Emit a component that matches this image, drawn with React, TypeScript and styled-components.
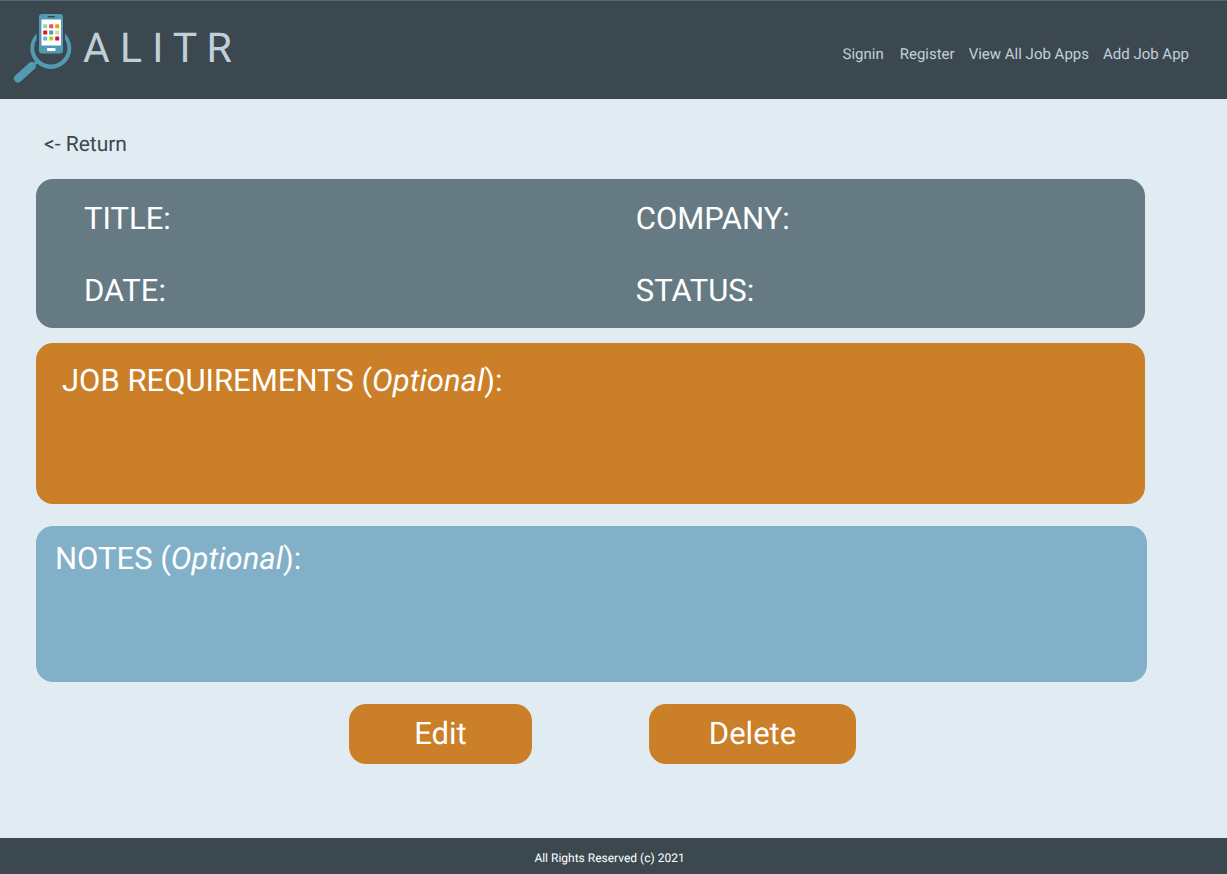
import React from "react";
import styled, { createGlobalStyle } from "styled-components";

const GlobalStyle = createGlobalStyle`
  *, *::before, *::after { box-sizing: border-box; }
  body {
    margin: 0;
    background: #e1ecf2;
    font-family: Roboto, "Liberation Sans", sans-serif;
    text-rendering: geometricPrecision;
  }
`;

const Page = styled.div`
  display: flex;
  flex-direction: column;
  min-height: 100vh;
`;

const Header = styled.header`
  display: flex;
  align-items: flex-start;
  justify-content: space-between;
  height: 99px;
  padding: 0 38px 0 12px;
  border-top: 1px solid #56646c;
  background: #3c484f;
`;

const Brand = styled.a`
  display: flex;
  align-items: flex-start;
  gap: 11px;
  padding-top: 12px;
  color: #c0d0da;
  text-decoration: none;
`;

const BrandName = styled.span`
  padding-top: 11px;
  font-size: 41px;
  line-height: 50px;
  white-space: nowrap;
`;

const Nav = styled.nav`
  display: flex;
  gap: 14px;
  padding-top: 43px;
`;

const NavLink = styled.a`
  color: #c0d0da;
  font-size: 15px;
  line-height: 20px;
  text-decoration: none;
  white-space: nowrap;

  &:first-child { margin-right: 2px; }
`;

const Main = styled.main`
  flex: 1;
  display: flex;
  flex-direction: column;
  padding: 34px 80px 40px 36px;
`;

const ReturnLink = styled.a`
  align-self: flex-start;
  margin: 0 0 22px 8px;
  color: #3c484f;
  font-size: 21px;
  line-height: 24px;
  text-decoration: none;
`;

const Panel = styled.section<{ $color: string }>`
  border-radius: 17px;
  background: ${({ $color }) => $color};
  color: #fff;
`;

const Summary = styled(Panel)`
  display: grid;
  grid-template-columns: 52fr 48fr;
  row-gap: 36px;
  margin: 0 2px 15px 0;
  padding: 22px 0 19px 48px;
`;

const Requirements = styled(Panel)`
  min-height: 161px;
  margin: 0 2px 22px 0;
  padding: 20px 26px;
`;

const Notes = styled(Panel)`
  min-height: 156px;
  margin-bottom: 22px;
  padding: 15px 19px;
`;

const Label = styled.h2`
  margin: 0;
  font-size: 31px;
  font-weight: 400;
  line-height: 36px;
`;

const Actions = styled.div`
  display: flex;
  align-items: flex-start;
  justify-content: center;
  gap: 117px;
  padding-left: 22px;
`;

const ActionButton = styled.button<{ $width: number }>`
  width: ${({ $width }) => $width}px;
  height: 60px;
  padding: 0;
  border: 0;
  border-radius: 17px;
  background: #ca7f28;
  color: #fff;
  font-family: inherit;
  font-size: 31px;
  line-height: 36px;
  text-rendering: inherit;
  cursor: pointer;
`;

const Footer = styled.footer`
  padding: 12px 8px 8px 0;
  background: #3c484f;
  color: #fff;
  font-size: 12px;
  line-height: 16px;
  text-align: center;
`;

const appTiles = [
  "#93d6a8", "#e84f68", "#f09a1c",
  "#e3161f", "#4f9ab3", "#bde58a",
  "#70b5d2", "#a5d91f", "#e6006f",
];

const Logo = () => (
  <svg width="60" height="72" viewBox="12 13 60 72" aria-hidden="true">
    <path
      d="M36.6 33.6A20.5 20.5 0 1 0 65 33.6V39.2A16.6 16.6 0 1 1 36.6 39.2Z"
      fill="#529bb2"
    />
    <path d="M39 59.5l-5 5" stroke="#529bb2" strokeWidth="3" />
    <path d="M31.8 66L18 78.5" stroke="#529bb2" strokeWidth="8" strokeLinecap="round" />
    <rect x="38" y="13" width="26" height="41.5" rx="4" fill="#3c484f" />
    <rect x="39" y="14" width="24" height="39.5" rx="3" fill="#529bb2" />
    <rect x="47.5" y="16" width="7.5" height="1.6" rx="0.8" fill="#3c484f" />
    <rect x="41.5" y="19.5" width="19.5" height="26" fill="#fff" />
    {appTiles.map((color, i) => (
      <rect
        key={color}
        x={43.2 + (i % 3) * 6}
        y={24.2 + Math.floor(i / 3) * 6.2}
        width="4"
        height="4"
        rx="0.5"
        fill={color}
      />
    ))}
    <rect x="47" y="48" width="8.5" height="3" rx="1" fill="#fff" />
  </svg>
);

export default function App() {
  return (
    <Page>
      <GlobalStyle />
      <Header>
        <Brand href="#">
          <Logo />
          <BrandName>A L I T R</BrandName>
        </Brand>
        <Nav>
          <NavLink href="#signin">Signin</NavLink>
          <NavLink href="#register">Register</NavLink>
          <NavLink href="#apps">View All Job Apps</NavLink>
          <NavLink href="#add">Add Job App</NavLink>
        </Nav>
      </Header>
      <Main>
        <ReturnLink href="#apps">&lt;- Return</ReturnLink>
        <Summary $color="#667a84">
          <Label>TITLE:</Label>
          <Label>COMPANY:</Label>
          <Label>DATE:</Label>
          <Label>STATUS:</Label>
        </Summary>
        <Requirements $color="#ca7f28">
          <Label>JOB REQUIREMENTS (<em>Optional</em>):</Label>
        </Requirements>
        <Notes $color="#82b0c8">
          <Label>NOTES (<em>Optional</em>):</Label>
        </Notes>
        <Actions>
          <ActionButton type="button" $width={183}>Edit</ActionButton>
          <ActionButton type="button" $width={207}>Delete</ActionButton>
        </Actions>
      </Main>
      <Footer>All Rights Reserved (c) 2021</Footer>
    </Page>
  );
}
